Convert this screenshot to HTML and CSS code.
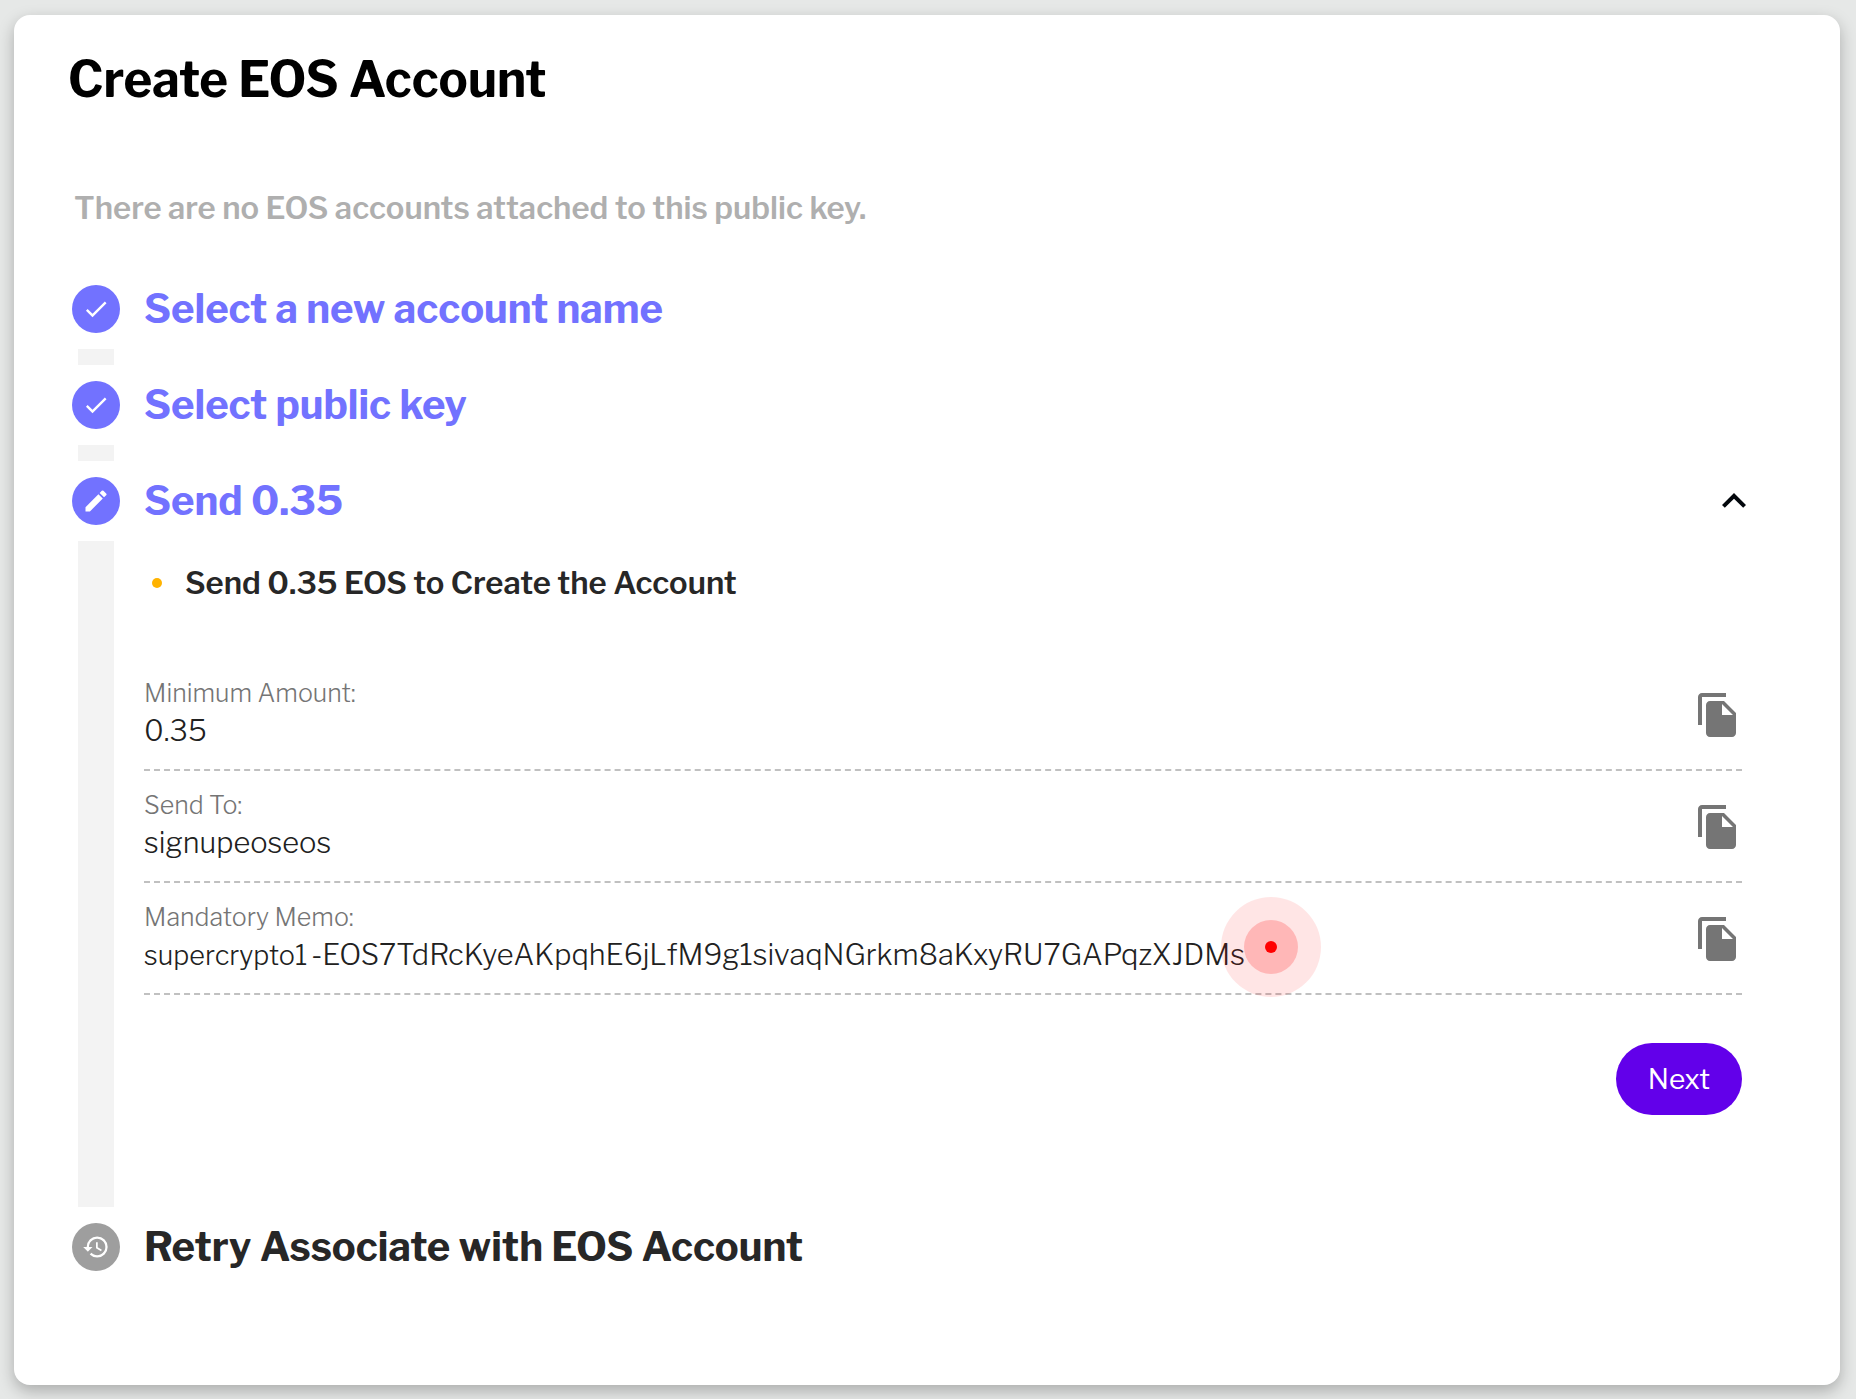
FILE: index.html
```html
<!DOCTYPE html>
<html lang="en">
<head>
<meta charset="utf-8">
<meta name="viewport" content="width=device-width, initial-scale=1">
<title>Create EOS Account</title>
<link rel="stylesheet" href="styles.css">
</head>
<body>
<svg class="sprite" aria-hidden="true">
  <symbol id="check" viewBox="0 0 24 24"><path d="M9 16.17 4.83 12l-1.42 1.41L9 19 21 7l-1.41-1.41z"/></symbol>
  <symbol id="pencil" viewBox="0 0 24 24"><path d="M3 17.25V21h3.75L17.81 9.94l-3.75-3.75L3 17.25zM20.71 7.04a1 1 0 0 0 0-1.41l-2.34-2.34a1 1 0 0 0-1.41 0l-1.83 1.83 3.75 3.75 1.83-1.83z"/></symbol>
  <symbol id="history" viewBox="0 0 24 24"><path d="M13 3a9 9 0 0 0-9 9H1l3.89 3.89.07.14L9 12H6c0-3.87 3.13-7 7-7s7 3.13 7 7-3.13 7-7 7c-1.93 0-3.68-.79-4.94-2.06l-1.42 1.42A8.95 8.95 0 0 0 13 21a9 9 0 0 0 0-18zm-1 5v5l4.28 2.54.72-1.21-3.5-2.08V8H12z"/></symbol>
  <symbol id="chevron" viewBox="0 0 24 24"><path d="M12 8l-6 6 1.41 1.41L12 10.83l4.59 4.58L18 14z"/></symbol>
  <symbol id="copy" viewBox="0 0 24 24"><path d="M16 1H4c-1.1 0-2 .9-2 2v14h2V3h12V1zm-1 4H8c-1.1 0-1.99.9-1.99 2L6 21c0 1.1.89 2 1.990 2H19c1.100 0 2-.9 2-2V11l-6-6zm-1 7V6.500l5.500 5.500H14z"/></symbol>
</svg>
<main class="card">
  <h1 class="title">Create EOS Account</h1>
  <p class="notice">There are no EOS accounts attached to this public key.</p>
  <ol class="steps">
    <li class="step">
      <span class="badge"><svg class="badge-icon"><use href="#check"/></svg></span>
      <h2 class="step-title">Select a new account name</h2>
      <span class="rail"></span>
    </li>
    <li class="step">
      <span class="badge"><svg class="badge-icon"><use href="#check"/></svg></span>
      <h2 class="step-title">Select public key</h2>
      <span class="rail"></span>
    </li>
    <li class="step">
      <span class="badge"><svg class="badge-icon"><use href="#pencil"/></svg></span>
      <div class="step-head">
        <h2 class="step-title">Send 0.35</h2>
        <button class="icon-button" type="button" aria-label="Collapse step"><svg class="icon chevron"><use href="#chevron"/></svg></button>
      </div>
      <span class="rail"></span>
      <div class="panel">
        <ul class="hints"><li class="hint">Send 0.35 EOS to Create the Account</li></ul>
        <dl class="fields">
          <div class="field">
            <div class="field-text"><dt class="label">Minimum Amount:</dt><dd class="value">0.35</dd></div>
            <button class="icon-button" type="button" aria-label="Copy minimum amount"><svg class="icon"><use href="#copy"/></svg></button>
          </div>
          <div class="field">
            <div class="field-text"><dt class="label">Send To:</dt><dd class="value">signupeoseos</dd></div>
            <button class="icon-button" type="button" aria-label="Copy recipient"><svg class="icon"><use href="#copy"/></svg></button>
          </div>
          <div class="field">
            <div class="field-text"><dt class="label">Mandatory Memo:</dt><dd class="value memo"><span class="account">supercrypto1</span><span>-EOS7TdRcKyeAKpqhE6jLfM9g1sivaqNGrkm8aKxyRU7GAPqzXJDMs</span><svg class="pointer" viewBox="0 0 100 100" aria-hidden="true"><circle class="halo" cx="50" cy="50" r="50"/><circle class="ring" cx="50" cy="50" r="27"/><circle class="dot" cx="50" cy="50" r="6"/></svg></dd></div>
            <button class="icon-button" type="button" aria-label="Copy memo"><svg class="icon"><use href="#copy"/></svg></button>
          </div>
        </dl>
        <button class="next" type="button">Next</button>
      </div>
    </li>
    <li class="step">
      <span class="badge pending"><svg class="badge-icon"><use href="#history"/></svg></span>
      <h2 class="step-title upcoming">Retry Associate with EOS Account</h2>
    </li>
  </ol>
</main>
</body>
</html>
```
FILE: styles.css
```css
* { box-sizing: border-box; }

body {
  margin: 0;
  padding: 15px 16px 14px 14px;
  background: #e6e8e7;
  color: #272727;
  font-family: "Libre Franklin", Inter, "Liberation Sans", sans-serif;
}

h1, h2, p, ol, ul, dl, dd { margin: 0; padding: 0; }
ol, ul { list-style: none; }
svg { display: block; fill: currentColor; }
.sprite { display: none; }

.card {
  padding: 32px 98px 114px 58px;
  border-radius: 16px;
  background: #fff;
  box-shadow: 0 6px 16px rgba(0, 0, 0, 0.26);
}

.title {
  margin-left: -4px;
  color: #000;
  font-size: 49px;
  font-weight: 700;
  line-height: 66px;
}

.notice {
  margin: 77px 0 59px 2px;
  color: #afafaf;
  font-size: 31px;
  font-weight: 600;
  line-height: 36px;
}

.steps { display: grid; gap: 16px; }

.step {
  display: grid;
  grid-template-columns: 48px minmax(0, 1fr);
  gap: 16px 24px;
}

.badge {
  display: grid;
  place-items: center;
  width: 48px;
  height: 48px;
  border-radius: 50%;
  background: #7272ff;
  color: #fff;
}
.badge.pending { background: #9e9e9e; }
.badge-icon { width: 28px; height: 28px; }

.rail {
  justify-self: center;
  width: 36px;
  min-height: 16px;
  background: #f3f3f3;
}

.step-head {
  display: flex;
  justify-content: space-between;
  margin-right: -16px;
}

.step-title {
  color: #7272ff;
  font-size: 40px;
  font-weight: 700;
  line-height: 48px;
}
.step-title.upcoming { color: #272727; }

.icon-button {
  flex: none;
  padding: 0;
  border: 0;
  background: none;
  color: #757575;
  cursor: pointer;
}
.icon { width: 48px; height: 48px; }
.chevron { color: #03070c; }

.panel { padding: 24px 0 92px; }

.hint {
  display: flex;
  align-items: center;
  gap: 23px;
  padding-left: 8px;
  font-size: 31px;
  font-weight: 600;
  line-height: 36px;
}
.hint::before {
  content: "";
  width: 10px;
  height: 10px;
  border-radius: 50%;
  background: #ffb300;
}

.fields { margin: 58px 0 48px; }

.field {
  display: flex;
  align-items: center;
  justify-content: space-between;
  padding: 18px 0 16px;
  border-bottom: 2px dashed #c0c0c0;
}

.label {
  color: #757575;
  font-size: 25px;
  font-weight: 300;
  line-height: 32px;
}

.value {
  color: #212121;
  font-size: 29px;
  font-weight: 300;
  line-height: 44px;
}

.memo {
  position: relative;
  display: flex;
  align-items: baseline;
  gap: 4px;
  width: max-content;
  height: 44px;
}
.account { font-size: 27px; }

/* click marker laid over the end of the memo */
.pointer {
  position: absolute;
  top: -36px;
  right: -76px;
  width: 100px;
  height: 100px;
}
.halo { fill: rgba(255, 0, 0, 0.1); }
.ring { fill: rgba(255, 0, 0, 0.2); }
.dot { fill: #f00; }

.next {
  display: block;
  margin-left: auto;
  padding: 0 32px;
  border: 0;
  border-radius: 36px;
  background: #6200ea;
  color: #fff;
  font-family: inherit;
  font-size: 28px;
  font-weight: 400;
  line-height: 72px;
  cursor: pointer;
}
```
